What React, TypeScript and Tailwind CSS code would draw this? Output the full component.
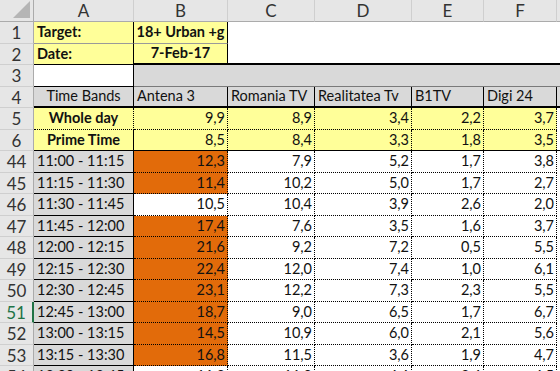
import React from "react";

const W = ["w-[34px]", "w-[100px]", "w-[94px]", "w-[87px]", "w-[97px]", "w-[72px]", "w-[73px]"];

type DataRow = { n: number; t: string; v: string[]; o: boolean };

const data: DataRow[] = [
  { n: 44, t: "11:00 - 11:15", v: ["12,3", "7,9", "5,2", "1,7", "3,8"], o: true },
  { n: 45, t: "11:15 - 11:30", v: ["11,4", "10,2", "5,0", "1,7", "2,7"], o: true },
  { n: 46, t: "11:30 - 11:45", v: ["10,5", "10,4", "3,9", "2,6", "2,0"], o: false },
  { n: 47, t: "11:45 - 12:00", v: ["17,4", "7,6", "3,5", "1,6", "3,7"], o: true },
  { n: 48, t: "12:00 - 12:15", v: ["21,6", "9,2", "7,2", "0,5", "5,5"], o: true },
  { n: 49, t: "12:15 - 12:30", v: ["22,4", "12,0", "7,4", "1,0", "6,1"], o: true },
  { n: 50, t: "12:30 - 12:45", v: ["23,1", "12,2", "7,3", "2,3", "5,5"], o: true },
  { n: 51, t: "12:45 - 13:00", v: ["18,7", "9,0", "6,5", "1,7", "6,7"], o: true },
  { n: 52, t: "13:00 - 13:15", v: ["14,5", "10,9", "6,0", "2,1", "5,6"], o: true },
  { n: 53, t: "13:15 - 13:30", v: ["16,8", "11,5", "3,6", "1,9", "4,7"], o: true },
  { n: 54, t: "13:30 - 13:45", v: ["11,3", "11,0", "4,6", "2,4", "4,5"], o: false },
];

function RowHead({ n, active }: { n: number; active?: boolean }) {
  return (
    <div
      className={
        "w-[34px] shrink-0 flex items-center justify-center bg-[#e6e6e6] border-b border-b-[#cfcfcf] text-[17px] leading-none " +
        (active ? "border-r-2 border-r-[#217346] text-[#217346]" : "border-r border-r-[#ababab] text-[#333]")
      }
    >
      {n}
    </div>
  );
}

function Cell({
  w,
  cls,
  children,
}: {
  w: string;
  cls: string;
  children?: React.ReactNode;
}) {
  return (
    <div className={w + " shrink-0 flex items-center overflow-hidden whitespace-nowrap leading-none " + cls}>
      {children}
    </div>
  );
}

export default function App() {
  const heights = ["h-[22px]", "h-[21px]"];
  return (
    <div className="w-[560px] h-[371px] overflow-hidden bg-white text-[#111] text-[14.5px] [font-family:Lato,'Noto_Sans',sans-serif]">
      {/* column header */}
      <div className="flex h-[22px]">
        <div className="w-[34px] shrink-0 flex items-end justify-end bg-[#e6e6e6] border-r border-b border-[#ababab] pr-[3px] pb-[3px]">
          <svg width="17" height="17" viewBox="0 0 17 17">
            <polygon points="17,0 17,17 0,17" fill="#b5b5b5" />
          </svg>
        </div>
        {["A", "B", "C", "D", "E", "F"].map((c, i) => (
          <div
            key={c}
            className={W[i + 1] + " shrink-0 flex items-center justify-center bg-[#e6e6e6] border-r border-r-[#cfcfcf] border-b border-b-[#ababab] text-[17px] leading-none text-[#333]"}
          >
            {c}
          </div>
        ))}
        <div className="flex-1 bg-[#e6e6e6] border-b border-b-[#ababab]" />
      </div>

      {/* row 1 */}
      <div className="flex h-[22px]">
        <RowHead n={1} />
        <Cell w={W[1]} cls="bg-[#ffff99] font-bold pl-[3px] border-r border-r-black border-b border-b-[#9a9a9a]">Target:</Cell>
        <Cell w={W[2]} cls="bg-[#ffff99] font-bold justify-center border-r border-r-black border-b border-b-[#9a9a9a]">18+ Urban +g</Cell>
        <div className="flex-1" />
      </div>

      {/* row 2 */}
      <div className="flex h-[21px]">
        <RowHead n={2} />
        <Cell w={W[1]} cls="bg-[#ffff99] font-bold pl-[3px] border-r border-r-black border-b border-b-black">Date:</Cell>
        <Cell w={W[2]} cls="bg-[#ffff99] font-bold justify-center border-r border-r-black border-b-2 border-b-black">7-Feb-17</Cell>
        <div className="flex-1 border-b-2 border-b-black" />
      </div>

      {/* row 3 */}
      <div className="flex h-[22px]">
        <RowHead n={3} />
        <Cell w={W[1]} cls="bg-white border-r border-r-black border-b border-b-black" />
        <div className="flex-1 bg-[#d9d9d9] border-b border-b-[#7a7a7a]" />
      </div>

      {/* row 4 */}
      <div className="flex h-[21px]">
        <RowHead n={4} />
        <Cell w={W[1]} cls="bg-[#d9d9d9] justify-center border-r border-r-black border-b-2 border-b-black">Time Bands</Cell>
        {["Antena 3", "Romania TV", "Realitatea Tv", "B1TV", "Digi 24"].map((h, i) => (
          <Cell key={h} w={W[i + 2]} cls="bg-[#d9d9d9] pl-[3px] border-r border-r-black border-b-2 border-b-black">
            {h}
          </Cell>
        ))}
        <div className="flex-1 bg-[#d9d9d9] border-b-2 border-b-black" />
      </div>

      {/* row 5 */}
      <div className="flex h-[22px]">
        <RowHead n={5} />
        <Cell w={W[1]} cls="bg-[#ffff99] font-bold justify-center border-r border-r-black border-b border-dotted border-b-black">Whole day</Cell>
        {["9,9", "8,9", "3,4", "2,2", "3,7"].map((v, i) => (
          <Cell key={i} w={W[i + 2]} cls="bg-[#ffff99] justify-end pr-[2px] border-r border-b border-dotted border-black">
            {v}
          </Cell>
        ))}
        <div className="flex-1" />
      </div>

      {/* row 6 */}
      <div className="flex h-[21px]">
        <RowHead n={6} />
        <Cell w={W[1]} cls="bg-[#ffff99] font-bold justify-center border-r border-r-black border-b border-b-black">Prime Time</Cell>
        {["8,5", "8,4", "3,3", "1,8", "3,5"].map((v, i) => (
          <div key={i} className={W[i + 2] + " shrink-0 flex border-b border-b-black"}>
            <div className="flex-1 flex items-center justify-end pr-[2px] bg-[#ffff99] border-r border-dotted border-r-black leading-none">
              {v}
            </div>
          </div>
        ))}
        <div className="flex-1 border-b border-b-black" />
      </div>

      {data.map((r, idx) => (
        <div key={r.n} className={"flex " + heights[idx % 2]}>
          <RowHead n={r.n} active={r.n === 51} />
          <Cell w={W[1]} cls="bg-[#d9d9d9] pl-[3px] border-r border-r-black border-b border-b-black">
            {r.t}
          </Cell>
          {r.v.map((v, i) => (
            <Cell
              key={i}
              w={W[i + 2]}
              cls={
                "justify-end pr-[2px] border-r border-b border-dotted border-black " +
                (i === 0 && r.o ? "bg-[#e26b0a]" : "bg-white")
              }
            >
              {v}
            </Cell>
          ))}
          <div className="flex-1" />
        </div>
      ))}
    </div>
  );
}
